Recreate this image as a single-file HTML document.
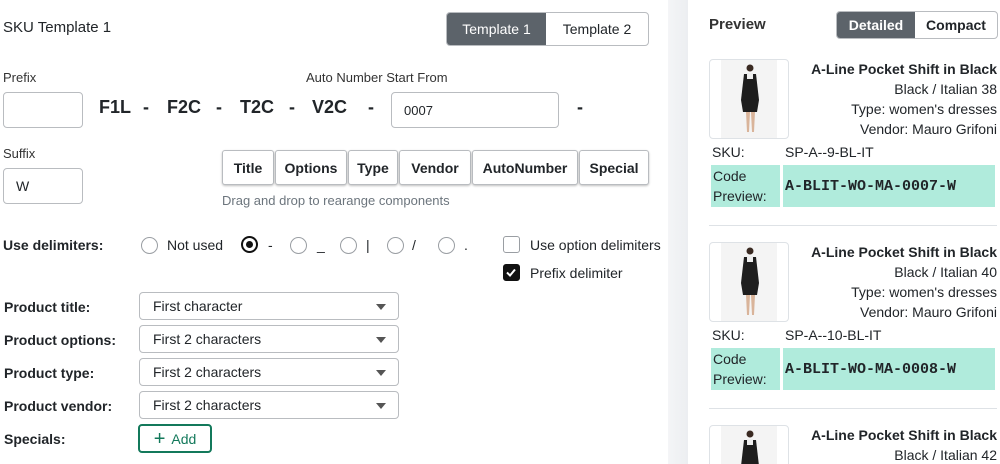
<!DOCTYPE html>
<html><head><style>
*{box-sizing:border-box;margin:0;padding:0}
html,body{width:1000px;height:464px;overflow:hidden}
body{background:#fff;font-family:"Liberation Sans",sans-serif;color:#212529;position:relative;font-size:14px}
.a{position:absolute;white-space:nowrap}
.inp{position:absolute;border:1px solid #b9bcc0;border-radius:4px;background:#fff;font-size:14px;padding-left:12px;display:flex;align-items:center}
.btn{position:absolute;border:1px solid #b9bcc0;border-radius:3px;background:#fff;font-weight:bold;font-size:14px;display:flex;align-items:center;justify-content:center;box-shadow:0 1px 2px rgba(0,0,0,.25)}
.rad{position:absolute;width:17px;height:17px;border:1.5px solid #9a9ea3;border-radius:50%}
.lbl{position:absolute;font-weight:bold;font-size:14px;left:4px}
.sel{position:absolute;left:139px;width:260px;height:28px;border:1px solid #b9bcc0;border-radius:4px;padding-left:13px;display:flex;align-items:center;font-size:14px}
.sel:after{content:"";position:absolute;right:12px;top:11px;border-left:5px solid transparent;border-right:5px solid transparent;border-top:6px solid #555}
.cb{position:absolute;width:17px;height:17px;border:1.5px solid #9a9ea3;border-radius:3px}
.gut{position:absolute;left:668px;top:0;width:20px;height:464px;background:linear-gradient(90deg,#f4f5f7,#eceef1)}
.item{position:absolute;left:709px;width:288px}
.img{position:absolute;left:0;top:0;width:80px;height:80px;border:1px solid #dee2e6;border-radius:4px;overflow:hidden;background:#fff}
.rt{position:absolute;right:0;text-align:right;font-size:14px;line-height:20px}
.code{position:absolute;top:106px;height:42px;background:#b0ebdc}
.big{position:absolute;top:97px;font-size:18px;font-weight:bold}
</style></head><body>
<div class="a" style="left:3px;top:19px;font-size:15px">SKU Template 1</div>
<div class="a" style="left:446px;top:12px;width:203px;height:34px;border:1px solid #b9bcc0;border-radius:4px;overflow:hidden;display:flex">
<div style="width:99px;background:#5c636a;color:#fff;display:flex;align-items:center;justify-content:center;font-size:14px">Template 1</div>
<div style="flex:1;display:flex;align-items:center;justify-content:center;font-size:14px">Template 2</div></div>

<div class="a" style="left:3px;top:70px;font-size:13px;color:#333">Prefix</div>
<div class="inp" style="left:3px;top:92px;width:80px;height:36px"></div>
<div class="big" style="left:99px">F1L</div>
<div class="big" style="left:143px">-</div>
<div class="big" style="left:167px">F2C</div>
<div class="big" style="left:216px">-</div>
<div class="big" style="left:240px">T2C</div>
<div class="big" style="left:289px">-</div>
<div class="big" style="left:312px">V2C</div>
<div class="big" style="left:368px">-</div>
<div class="a" style="left:306px;top:70px;font-size:13px;color:#333">Auto Number Start From</div>
<div class="inp" style="left:391px;top:92px;width:168px;height:36px;font-size:13px">0007</div>
<div class="big" style="left:577px">-</div>

<div class="a" style="left:3px;top:146px;font-size:13px;color:#333">Suffix</div>
<div class="inp" style="left:3px;top:168px;width:80px;height:36px">W</div>
<div class="btn" style="left:222px;top:150px;width:52px;height:35px">Title</div>
<div class="btn" style="left:275px;top:150px;width:72px;height:35px">Options</div>
<div class="btn" style="left:348px;top:150px;width:50px;height:35px">Type</div>
<div class="btn" style="left:399px;top:150px;width:72px;height:35px">Vendor</div>
<div class="btn" style="left:472px;top:150px;width:106px;height:35px">AutoNumber</div>
<div class="btn" style="left:579px;top:150px;width:70px;height:35px">Special</div>
<div class="a" style="left:222px;top:193px;font-size:13px;color:#6c757d">Drag and drop to rearange components</div>

<div class="lbl" style="top:237px;left:3px">Use delimiters:</div>
<div class="rad" style="left:141px;top:237px"></div><div class="a" style="left:167px;top:237px">Not used</div>
<div class="rad" style="left:241px;top:236px;border:2px solid #111"><div style="position:absolute;left:3px;top:3px;width:7px;height:7px;border-radius:50%;background:#111"></div></div><div class="a" style="left:268px;top:237px">-</div>
<div class="rad" style="left:290px;top:237px"></div><div class="a" style="left:317px;top:237px">_</div>
<div class="rad" style="left:340px;top:237px"></div><div class="a" style="left:366px;top:237px">|</div>
<div class="rad" style="left:387px;top:237px"></div><div class="a" style="left:412px;top:237px">/</div>
<div class="rad" style="left:438px;top:237px"></div><div class="a" style="left:464px;top:237px">.</div>
<div class="cb" style="left:503px;top:236px"></div><div class="a" style="left:530px;top:237px">Use option delimiters</div>
<div class="cb" style="left:503px;top:264px;background:#111;border-color:#111"><svg width="14" height="14" style="position:absolute;left:0;top:0"><path d="M3 7.5l3 3 5-6" stroke="#fff" stroke-width="2" fill="none"/></svg></div><div class="a" style="left:530px;top:265px">Prefix delimiter</div>

<div class="lbl" style="top:299px">Product title:</div><div class="sel" style="top:292px">First character</div>
<div class="lbl" style="top:332px">Product options:</div><div class="sel" style="top:325px">First 2 characters</div>
<div class="lbl" style="top:365px">Product type:</div><div class="sel" style="top:358px">First 2 characters</div>
<div class="lbl" style="top:398px">Product vendor:</div><div class="sel" style="top:391px">First 2 characters</div>
<div class="lbl" style="top:431px">Specials:</div>
<div class="a" style="left:138px;top:424px;width:74px;height:29px;border:2px solid #13795b;border-radius:4px;color:#13795b;display:flex;align-items:center;justify-content:center;font-size:14px"><span style="font-size:20px;margin-right:6px;line-height:1">+</span>Add</div>

<div class="gut"></div>
<div class="a" style="left:709px;top:16px;font-size:15px;font-weight:bold;color:#333">Preview</div>
<div class="a" style="left:836px;top:11px;width:162px;height:28px;border:1px solid #b9bcc0;border-radius:4px;overflow:hidden;display:flex">
<div style="width:78px;background:#5c636a;color:#fff;font-weight:bold;display:flex;align-items:center;justify-content:center;font-size:14px">Detailed</div>
<div style="flex:1;display:flex;align-items:center;justify-content:center;font-weight:bold;font-size:14px">Compact</div></div>

<div class="item" style="top:59px;height:170px">
<div class="img"><svg width="80" height="80"><rect x="11" y="0" width="56" height="80" fill="#f4f4f4"/><circle cx="40" cy="8" r="3.5" fill="#3a2a22"/><path d="M34 14h12l3 26-2 12h-14l-2-12z" fill="#1e1e1e"/><rect x="37" y="13" width="6" height="6" fill="#eee"/><path d="M36 52l1 20h2l1-20M41 52l1 20h2l1-20" fill="#d9b49a"/></svg></div>
<div class="rt" style="top:0;font-weight:bold">A-Line Pocket Shift in Black</div>
<div class="rt" style="top:20px">Black / Italian 38</div>
<div class="rt" style="top:40px">Type: women's dresses</div>
<div class="rt" style="top:60px">Vendor: Mauro Grifoni</div>
<div class="a" style="left:3px;top:85px">SKU:</div><div class="a" style="left:76px;top:85px">SP-A--9-BL-IT</div>
<div class="code" style="left:2px;width:69px;padding:1px 2px;font-size:14px;line-height:20px">Code<br>Preview:</div>
<div class="code" style="left:74px;width:212px;font-family:'Liberation Mono',monospace;font-weight:bold;font-size:15px;display:flex;align-items:center;padding-left:2px">A-BLIT-WO-MA-0007-W</div>
</div>
<div class="a" style="left:709px;top:225px;width:288px;height:1px;background:#dee2e6"></div>

<div class="item" style="top:242px;height:170px">
<div class="img"><svg width="80" height="80"><rect x="11" y="0" width="56" height="80" fill="#f4f4f4"/><circle cx="40" cy="8" r="3.5" fill="#3a2a22"/><path d="M34 14h12l3 26-2 12h-14l-2-12z" fill="#1e1e1e"/><rect x="37" y="13" width="6" height="6" fill="#eee"/><path d="M36 52l1 20h2l1-20M41 52l1 20h2l1-20" fill="#d9b49a"/></svg></div>
<div class="rt" style="top:0;font-weight:bold">A-Line Pocket Shift in Black</div>
<div class="rt" style="top:20px">Black / Italian 40</div>
<div class="rt" style="top:40px">Type: women's dresses</div>
<div class="rt" style="top:60px">Vendor: Mauro Grifoni</div>
<div class="a" style="left:3px;top:85px">SKU:</div><div class="a" style="left:76px;top:85px">SP-A--10-BL-IT</div>
<div class="code" style="left:2px;width:69px;padding:1px 2px;font-size:14px;line-height:20px">Code<br>Preview:</div>
<div class="code" style="left:74px;width:212px;font-family:'Liberation Mono',monospace;font-weight:bold;font-size:15px;display:flex;align-items:center;padding-left:2px">A-BLIT-WO-MA-0008-W</div>
</div>
<div class="a" style="left:709px;top:408px;width:288px;height:1px;background:#dee2e6"></div>

<div class="item" style="top:425px;height:39px;overflow:hidden">
<div class="img"><svg width="80" height="80"><rect x="11" y="0" width="56" height="80" fill="#f4f4f4"/><circle cx="40" cy="8" r="3.5" fill="#3a2a22"/><path d="M34 14h12l3 26-2 12h-14l-2-12z" fill="#1e1e1e"/><rect x="37" y="13" width="6" height="6" fill="#eee"/></svg></div>
<div class="rt" style="top:0;font-weight:bold">A-Line Pocket Shift in Black</div>
<div class="rt" style="top:20px">Black / Italian 42</div>
</div>
</body></html>
